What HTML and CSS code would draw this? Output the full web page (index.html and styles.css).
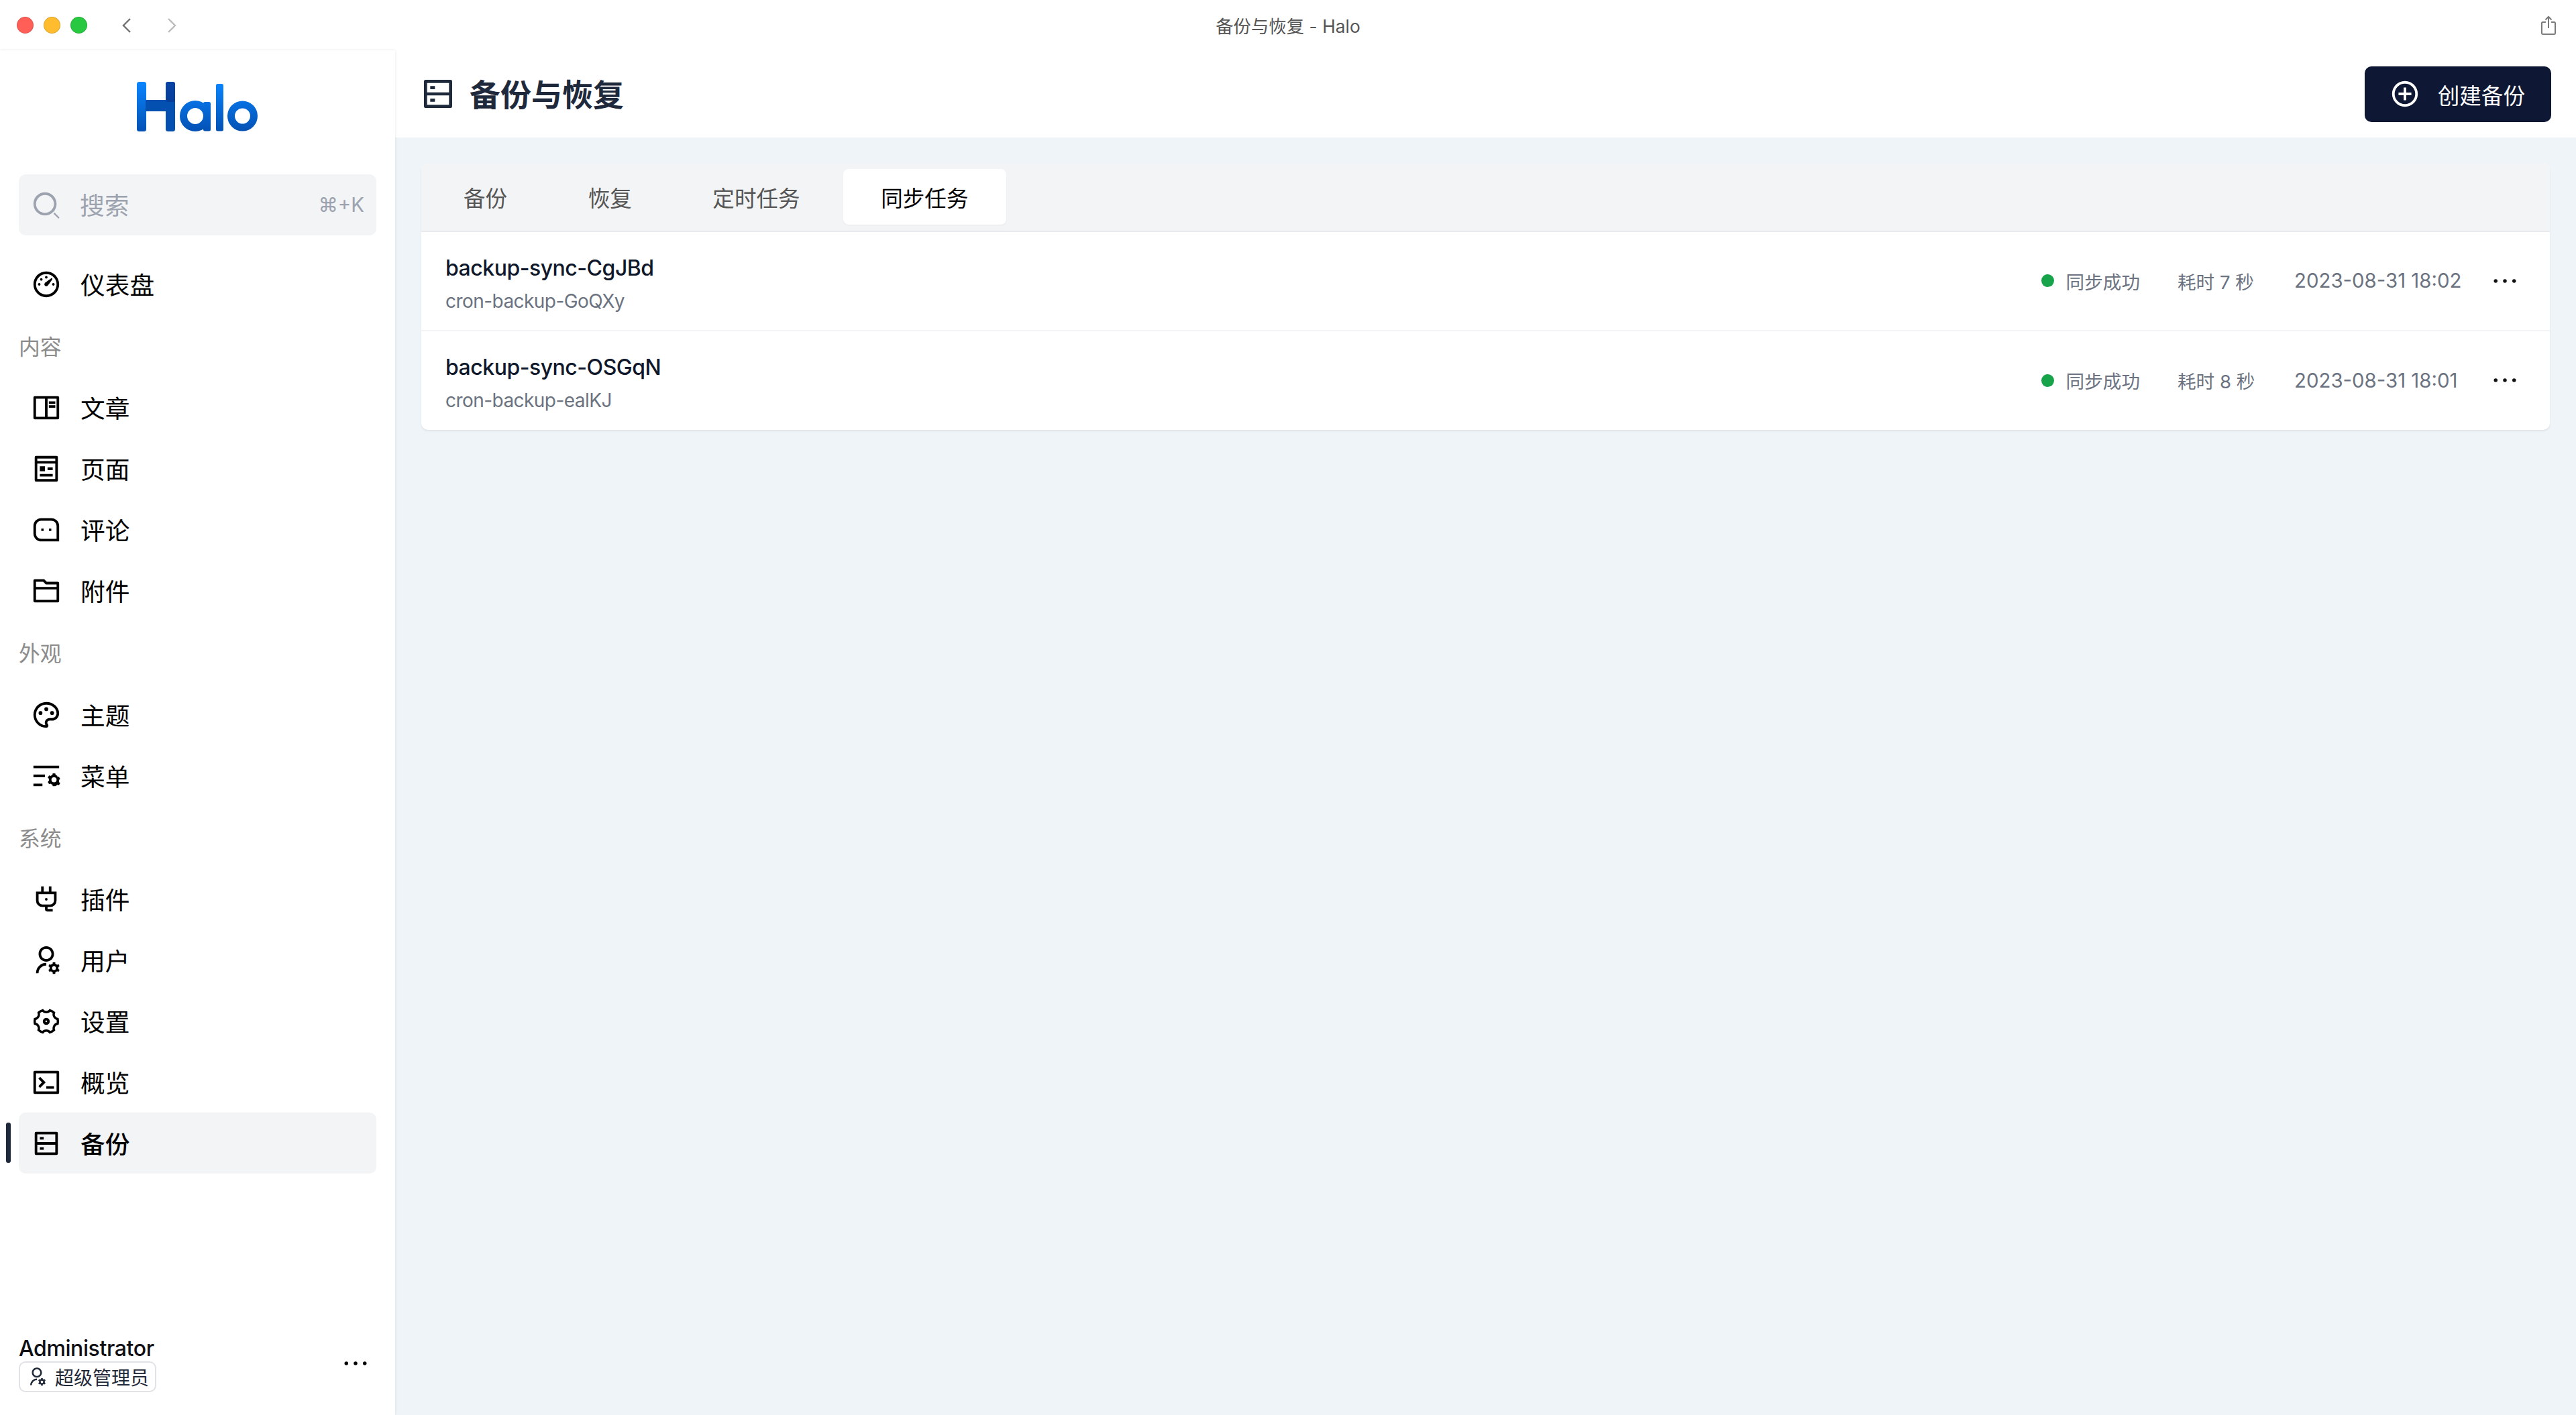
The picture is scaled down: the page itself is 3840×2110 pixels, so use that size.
FILE: index.html
```html
<!DOCTYPE html>
<html lang="zh-CN">
<head>
    <meta charset="UTF-8" />
    <title>备份与恢复 - Halo</title>
    <link rel="stylesheet" href="styles.css">
</head>
<body>
    <!-- Window title bar -->
    <header class="titlebar">
        <div class="titlebar-left">
            <span class="light light-red"></span>
            <span class="light light-yellow"></span>
            <span class="light light-green"></span>
            <svg class="nav-arrow" viewBox="0 0 14 24"><path d="M12 2 2 12l10 10"/></svg>
            <svg class="nav-arrow nav-arrow-off" viewBox="0 0 14 24"><path d="m2 2 10 10L2 22"/></svg>
        </div>
        <div class="titlebar-title">备份与恢复 - Halo</div>
        <div class="titlebar-right">
            <svg class="share-icon" viewBox="0 0 24 30"><path d="M8 10H3.5a1.5 1.5 0 0 0-1.500 1.500v15A1.500 1.500 0 0 0 3.500 28h17a1.500 1.500 0 0 0 1.500-1.500v-15a1.500 1.500 0 0 0-1.500-1.500H16M12 19V2M7.500 6.500 12 2l4.500 4.500"/></svg>
        </div>
    </header>

    <div class="app">
        <aside class="sidebar">
            <svg class="logo" viewBox="0 0 181 74" role="img" aria-label="Halo">
                <defs>
                    <linearGradient id="logoBlue" gradientUnits="userSpaceOnUse" x1="0" y1="0" x2="0" y2="74">
                        <stop offset="0" stop-color="#0a85ff"/>
                        <stop offset="1" stop-color="#0351b4"/>
                    </linearGradient>
                    <linearGradient id="logoDark" gradientUnits="userSpaceOnUse" x1="0" y1="0" x2="0" y2="40">
                        <stop offset="0" stop-color="#0743a6"/>
                        <stop offset="1" stop-color="#053c95"/>
                    </linearGradient>
                </defs>
                <rect x="0" y="0" width="14" height="74" rx="3.500" fill="url(#logoBlue)"/>
                <rect x="43" y="0" width="14" height="74" rx="3.500" fill="#0450b0"/>
                <rect x="43" y="0" width="14" height="30" rx="3.500" fill="url(#logoDark)"/>
                <rect x="13" y="27" width="31" height="17" fill="#0450b0"/>
                <circle cx="87" cy="51" r="17.500" fill="none" stroke="url(#logoBlue)" stroke-width="11"/>
                <rect x="99" y="30" width="11" height="43.500" rx="2.500" fill="url(#logoBlue)"/>
                <rect x="118" y="3" width="11" height="70.500" rx="2.500" fill="url(#logoBlue)"/>
                <circle cx="157.500" cy="51" r="17" fill="none" stroke="url(#logoBlue)" stroke-width="11"/>
            </svg>

            <div class="search">
                <svg class="icon" viewBox="0 0 24 24"><path d="M11 2c4.968 0 9 4.032 9 9s-4.032 9-9 9-9-4.032-9-9 4.032-9 9-9zm0 16c3.867 0 7-3.133 7-7 0-3.868-3.133-7-7-7-3.868 0-7 3.132-7 7 0 3.867 3.132 7 7 7zm7.500-.3 3.800 3.900-.8.8-3.900-3.800z"/></svg>
                <span class="search-text">搜索</span>
                <span class="search-key">⌘+K</span>
            </div>

            <nav class="menu">
                <a class="menu-item">
                    <svg class="icon" viewBox="0 0 24 24"><path d="M12 2c5.523 0 10 4.477 10 10s-4.477 10-10 10S2 17.523 2 12 6.477 2 12 2zm0 2a8 8 0 1 0 0 16 8 8 0 0 0 0-16zm3.833 3.337c.237-.166.559-.138.763.067.204.204.23.526.063.76-2.18 3.046-3.38 4.678-3.598 4.897-.586.585-1.536.585-2.122 0-.585-.586-.585-1.536 0-2.122.374-.373 2.005-1.574 4.894-3.602zM17.500 11c.552 0 1 .448 1 1s-.448 1-1 1-1-.448-1-1 .448-1 1-1zm-11 0c.552 0 1 .448 1 1s-.448 1-1 1-1-.448-1-1 .448-1 1-1zm2.318-3.596c.39.39.39 1.023 0 1.414-.39.39-1.024.39-1.414 0-.39-.39-.39-1.024 0-1.414.39-.39 1.023-.39 1.414 0zM12 5.500c.552 0 1 .448 1 1s-.448 1-1 1-1-.448-1-1 .448-1 1-1z"/></svg>
                    仪表盘
                </a>

                <div class="menu-label">内容</div>
                <a class="menu-item">
                    <svg class="icon" viewBox="0 0 24 24"><path d="M2 3.993A.993.993 0 0 1 2.992 3h18.016c.548 0 .992.445.992.993v16.014a.993.993 0 0 1-.992.993H2.992A.993.993 0 0 1 2 20.007V3.993zM11 5H4v14h7V5zm2 0v14h7V5h-7zm1 2h5v2h-5V7zm0 3h5v2h-5v-2z"/></svg>
                    文章
                </a>
                <a class="menu-item">
                    <svg class="icon" viewBox="0 0 24 24"><path d="M5 8v12h14V8H5zm0-2h14V4H5v2zm15 16H4a1 1 0 0 1-1-1V3a1 1 0 0 1 1-1h16a1 1 0 0 1 1 1v18a1 1 0 0 1-1 1zM7 10h4v4H7v-4zm0 6h10v2H7v-2zm6-5h4v2h-4v-2z"/></svg>
                    页面
                </a>
                <a class="menu-item">
                    <svg class="icon" viewBox="0 0 24 24"><path class="icon-line" d="M8 4h8a5 5 0 0 1 5 5v11H8a5 5 0 0 1-5-5V9a5 5 0 0 1 5-5z"/><rect x="8.100" y="11.100" width="1.800" height="1.800"/><rect x="14.100" y="11.100" width="1.800" height="1.800"/></svg>
                    评论
                </a>
                <a class="menu-item">
                    <svg class="icon" viewBox="0 0 24 24"><path d="M12.414 5H21a1 1 0 0 1 1 1v14a1 1 0 0 1-1 1H3a1 1 0 0 1-1-1V4a1 1 0 0 1 1-1h7.414l2 2zM20 11H4v8h16v-8zm0-2V7h-8.414l-2-2H4v4h16z"/></svg>
                    附件
                </a>

                <div class="menu-label">外观</div>
                <a class="menu-item">
                    <svg class="icon" viewBox="0 0 24 24"><path d="M12 2c5.522 0 10 3.978 10 8.889a5.558 5.558 0 0 1-5.556 5.555h-1.966c-.922 0-1.667.745-1.667 1.667 0 .422.167.811.422 1.100.267.3.434.689.434 1.122C13.667 21.256 12.900 22 12 22 6.478 22 2 17.522 2 12S6.478 2 12 2zm-1.189 16.111a3.664 3.664 0 0 1 3.667-3.667h1.966A3.558 3.558 0 0 0 20 10.889C20 7.139 16.468 4 12 4a8 8 0 0 0-.676 15.972 3.648 3.648 0 0 1-.513-1.860zM7.500 12a1.500 1.500 0 1 1 0-3 1.500 1.500 0 0 1 0 3zm9 0a1.500 1.500 0 1 1 0-3 1.500 1.500 0 0 1 0 3zM12 9a1.500 1.500 0 1 1 0-3 1.500 1.500 0 0 1 0 3z"/></svg>
                    主题
                </a>
                <a class="menu-item">
                    <svg class="icon" viewBox="0 0 24 24"><path d="M2 18h7v2H2v-2zm0-7h9v2H2v-2zm0-7h20v2H2V4zm18.674 9.025l1.156-.391 1 1.732-.916.805a4.017 4.017 0 0 1 0 1.658l.916.805-1 1.732-1.156-.391c-.41.37-.898.655-1.435.83L19 20h-2l-.24-1.196a3.996 3.996 0 0 1-1.434-.83l-1.156.392-1-1.732.916-.805a4.017 4.017 0 0 1 0-1.658l-.916-.805 1-1.732 1.156.391c.41-.37.898-.655 1.435-.83L17 10h2l.24 1.196c.536.174 1.024.46 1.434.83zM18 17a2 2 0 1 0 0-4 2 2 0 0 0 0 4z"/></svg>
                    菜单
                </a>

                <div class="menu-label">系统</div>
                <a class="menu-item">
                    <svg class="icon" viewBox="0 0 24 24"><path class="icon-line" d="M9 2v5M15 2v5M5 7h14v6a4 4 0 0 1-4 4H9a4 4 0 0 1-4-4zM12 17v2.500a1 1 0 0 0 1 1h4"/><circle cx="12" cy="12" r="1"/></svg>
                    插件
                </a>
                <a class="menu-item">
                    <svg class="icon" viewBox="0 0 24 24"><path d="M12 14v2a6 6 0 0 0-6 6H4a8 8 0 0 1 8-8zm0-1c-3.315 0-6-2.685-6-6s2.685-6 6-6 6 2.685 6 6-2.685 6-6 6zm0-2c2.210 0 4-1.790 4-4s-1.790-4-4-4-4 1.790-4 4 1.790 4 4 4zm2.595 7.812a3.510 3.510 0 0 1 0-1.623l-.992-.573 1-1.732.992.573A3.496 3.496 0 0 1 17 14.645V13.500h2v1.145c.532.158 1.012.44 1.405.812l.992-.573 1 1.732-.992.573a3.510 3.510 0 0 1 0 1.622l.992.573-1 1.732-.992-.573a3.496 3.496 0 0 1-1.405.812V22.500h-2v-1.145a3.496 3.496 0 0 1-1.405-.812l-.992.573-1-1.732.992-.572zM18 19.500a1.500 1.500 0 1 0 0-3 1.500 1.500 0 0 0 0 3z"/></svg>
                    用户
                </a>
                <a class="menu-item">
                    <svg class="icon" viewBox="0 0 24 24"><path class="icon-line" transform="translate(1.200 1.200) scale(.9)" d="M5.334 4.545a9.990 9.990 0 0 1 3.542-2.048A3.993 3.993 0 0 0 12 3.999a3.993 3.993 0 0 0 3.124-1.502 9.990 9.990 0 0 1 3.542 2.048 3.993 3.993 0 0 0 .262 3.454 3.993 3.993 0 0 0 2.863 1.955 10.043 10.043 0 0 1 0 4.090c-1.160.178-2.230.86-2.863 1.955a3.993 3.993 0 0 0-.262 3.455 9.990 9.990 0 0 1-3.542 2.047A3.993 3.993 0 0 0 12 20a3.993 3.993 0 0 0-3.124 1.502 9.990 9.990 0 0 1-3.542-2.047 3.993 3.993 0 0 0-.262-3.455 3.993 3.993 0 0 0-2.863-1.954 10.043 10.043 0 0 1 0-4.091 3.993 3.993 0 0 0 2.863-1.955 3.993 3.993 0 0 0 .262-3.454z"/><circle class="icon-line" cx="12" cy="12" r="1.700"/></svg>
                    设置
                </a>
                <a class="menu-item">
                    <svg class="icon" viewBox="0 0 24 24"><path d="M3 3h18a1 1 0 0 1 1 1v16a1 1 0 0 1-1 1H3a1 1 0 0 1-1-1V4a1 1 0 0 1 1-1zm1 2v14h16V5H4zm8 10h6v2h-6v-2zm-3.333-3L5.838 9.172l1.415-1.415L11.495 12l-4.242 4.243-1.415-1.415L8.667 12z"/></svg>
                    概览
                </a>
                <a class="menu-item menu-item-active">
                    <span class="menu-marker"></span>
                    <svg class="icon" viewBox="0 0 24 24"><path d="M5 11h14V5H5v6zm16-7v16a1 1 0 0 1-1 1H4a1 1 0 0 1-1-1V4a1 1 0 0 1 1-1h16a1 1 0 0 1 1 1zm-2 9H5v6h14v-6zM7 15h3v2H7v-2zm0-8h3v2H7V7z"/></svg>
                    备份
                </a>
            </nav>

            <div class="profile">
                <div class="profile-info">
                    <div class="profile-name">Administrator</div>
                    <div class="profile-badge">
                        <svg viewBox="0 0 24 24"><path d="M12 14v2a6 6 0 0 0-6 6H4a8 8 0 0 1 8-8zm0-1c-3.315 0-6-2.685-6-6s2.685-6 6-6 6 2.685 6 6-2.685 6-6 6zm0-2c2.210 0 4-1.790 4-4s-1.790-4-4-4-4 1.790-4 4 1.790 4 4 4zm2.595 7.812a3.510 3.510 0 0 1 0-1.623l-.992-.573 1-1.732.992.573A3.496 3.496 0 0 1 17 14.645V13.500h2v1.145c.532.158 1.012.44 1.405.812l.992-.573 1 1.732-.992.573a3.510 3.510 0 0 1 0 1.622l.992.573-1 1.732-.992-.573a3.496 3.496 0 0 1-1.405.812V22.500h-2v-1.145a3.496 3.496 0 0 1-1.405-.812l-.992.573-1-1.732.992-.572zM18 19.500a1.500 1.500 0 1 0 0-3 1.500 1.500 0 0 0 0 3z"/></svg>
                        超级管理员
                    </div>
                </div>
                <svg class="icon more" viewBox="0 0 24 24"><circle cx="4.500" cy="12" r="1.500"/><circle cx="12" cy="12" r="1.500"/><circle cx="19.500" cy="12" r="1.500"/></svg>
            </div>
        </aside>

        <main class="main">
            <div class="page-header">
                <h1 class="page-title">
                    <svg viewBox="0 0 24 24"><path d="M5 11h14V5H5v6zm16-7v16a1 1 0 0 1-1 1H4a1 1 0 0 1-1-1V4a1 1 0 0 1 1-1h16a1 1 0 0 1 1 1zm-2 9H5v6h14v-6zM7 15h3v2H7v-2zm0-8h3v2H7V7z"/></svg>
                    <span class="page-title-text">备份与恢复</span>
                </h1>
                <button class="btn-create" type="button">
                    <svg class="icon" viewBox="0 0 24 24"><path d="M11 11V7h2v4h4v2h-4v4h-2v-4H7v-2h4zm1 11C6.477 22 2 17.523 2 12S6.477 2 12 2s10 4.477 10 10-4.477 10-10 10zm0-2a8 8 0 1 0 0-16 8 8 0 0 0 0 16z"/></svg>
                    创建备份
                </button>
            </div>

            <div class="content">
                <section class="card">
                    <div class="tabs">
                        <div class="tab">备份</div>
                        <div class="tab">恢复</div>
                        <div class="tab">定时任务</div>
                        <div class="tab tab-active">同步任务</div>
                    </div>

                    <div class="row">
                        <div class="row-main">
                            <div class="row-title">backup-sync-CgJBd</div>
                            <div class="row-sub">cron-backup-GoQXy</div>
                        </div>
                        <div class="row-status"><span class="dot"></span>同步成功</div>
                        <div class="row-duration">耗时 7 秒</div>
                        <div class="row-date">2023-08-31 18:02</div>
                        <svg class="icon more" viewBox="0 0 24 24"><circle cx="4.500" cy="12" r="1.500"/><circle cx="12" cy="12" r="1.500"/><circle cx="19.500" cy="12" r="1.500"/></svg>
                    </div>
                    <div class="row">
                        <div class="row-main">
                            <div class="row-title">backup-sync-OSGqN</div>
                            <div class="row-sub">cron-backup-ealKJ</div>
                        </div>
                        <div class="row-status"><span class="dot"></span>同步成功</div>
                        <div class="row-duration">耗时 8 秒</div>
                        <div class="row-date">2023-08-31 18:01</div>
                        <svg class="icon more" viewBox="0 0 24 24"><circle cx="4.500" cy="12" r="1.500"/><circle cx="12" cy="12" r="1.500"/><circle cx="19.500" cy="12" r="1.500"/></svg>
                    </div>
                </section>
            </div>
        </main>
    </div>
</body>
</html>
```

FILE: styles.css
```css
* {
    margin: 0;
    padding: 0;
    box-sizing: border-box;
}

html, body {
    height: 100%;
}

body {
    display: flex;
    flex-direction: column;
    font-family: Inter, "Noto Sans CJK SC", sans-serif;
    background: #fff;
    color: #000;
    overflow: hidden;
}

/* Window title bar */
.titlebar {
    display: grid;
    grid-template-columns: 1fr auto 1fr;
    align-items: center;
    height: 75px;
    padding: 0 25px;
    flex-shrink: 0;
}

.titlebar-left {
    display: flex;
    align-items: center;
    gap: 15px;
}

.light {
    width: 25px;
    height: 25px;
    border-radius: 50%;
    border: 1px solid rgba(0, 0, 0, 0.14);
}

.light-red { background: #ff5f57; }
.light-yellow { background: #febc2e; }
.light-green { background: #28c840; }

.nav-arrow {
    width: 14px;
    height: 24px;
    margin-left: 37px;
    fill: none;
    stroke: #6f6f6f;
    stroke-width: 2.4;
}

.nav-arrow-off {
    margin-left: 38px;
    stroke: #bdbdbd;
}

.titlebar-title {
    font-size: 26.4px;
    color: #555;
}

.titlebar-right {
    display: flex;
    justify-content: flex-end;
}

.share-icon {
    width: 24px;
    height: 30px;
    margin-right: 4px;
    fill: none;
    stroke: #7a7a7a;
    stroke-width: 2;
}

/* App layout */
.app {
    flex: 1;
    display: flex;
    min-height: 0;
}

.sidebar {
    position: relative;
    z-index: 1;
    width: 589px;
    flex-shrink: 0;
    display: flex;
    flex-direction: column;
    background: #fff;
    box-shadow: 0 0 4px rgba(0, 0, 0, 0.1);
}

.logo {
    width: 181px;
    height: 74px;
    margin: 47px auto 64px;
    flex-shrink: 0;
}

.icon {
    width: 46px;
    height: 46px;
    flex-shrink: 0;
    fill: currentColor;
}

.icon-line {
    fill: none;
    stroke: currentColor;
    stroke-width: 2;
}

.search {
    display: flex;
    align-items: center;
    height: 91px;
    margin: 0 28px;
    padding: 0 18px;
    border-radius: 10px;
    background: #f3f4f6;
    color: #9ca3af;
}

.search-text {
    margin-left: 27px;
    margin-bottom: 4px;
    font-size: 36.7px;
}

.search-key {
    margin-left: auto;
    font-size: 29.4px;
}

.menu {
    margin-top: 26px;
    padding: 0 28px;
}

.menu-item {
    position: relative;
    display: flex;
    align-items: center;
    gap: 28px;
    height: 91px;
    padding-left: 18px;
    border-radius: 10px;
    font-size: 36.7px;
    color: #000;
}

.menu-item .icon {
    margin-top: 2px;
}

.menu-item-active {
    background: #f3f4f6;
    font-weight: 500;
}

.menu-marker {
    position: absolute;
    left: -19px;
    top: 15px;
    width: 7px;
    height: 60px;
    border-radius: 3px;
    background: #1e293b;
}

.menu-label {
    display: flex;
    align-items: center;
    height: 93.5px;
    font-size: 31.8px;
    color: #8c8c8c;
}

.profile {
    display: flex;
    align-items: center;
    justify-content: space-between;
    margin-top: auto;
    padding: 0 37px 34px 28px;
}

.profile-name {
    font-size: 32px;
    font-weight: 500;
    letter-spacing: -0.4px;
    line-height: 42px;
    color: #0f0f14;
}

.profile-badge {
    display: flex;
    align-items: center;
    gap: 12px;
    width: 205px;
    height: 46px;
    margin-top: -2px;
    padding-left: 10px;
    border: 2.4px solid #e0e2e6;
    border-radius: 10px;
    font-size: 28px;
    color: #1f2937;
}

.profile-badge svg {
    width: 30px;
    height: 30px;
    fill: currentColor;
}

.more {
    width: 44px;
    height: 44px;
}

/* Main area */
.main {
    flex: 1;
    display: flex;
    flex-direction: column;
    min-width: 0;
    background: #eff4f8;
}

.page-header {
    display: flex;
    align-items: center;
    justify-content: space-between;
    height: 130px;
    padding: 0 37px 0 36px;
    background: #fff;
    flex-shrink: 0;
}

.page-title {
    display: flex;
    align-items: center;
    gap: 19px;
    font-size: 46px;
    font-weight: 700;
    color: #1e293b;
}

.page-title svg {
    width: 56px;
    height: 56px;
    fill: currentColor;
}

.page-title-text {
    margin-bottom: 4px;
}

.btn-create {
    display: flex;
    align-items: center;
    gap: 26px;
    height: 83px;
    padding: 0 39px 0 37px;
    border: none;
    border-radius: 10px;
    background: #0e1733;
    color: #fff;
    font-family: inherit;
    font-size: 32.6px;
}

.content {
    padding: 39px;
}

.card {
    background: #fff;
    border-radius: 10px;
    box-shadow: 0 2px 3px rgba(0, 0, 0, 0.07);
    overflow: hidden;
}

.tabs {
    display: flex;
    gap: 8.5px;
    height: 102px;
    padding: 8px 7px 0;
    background: #f3f4f6;
    border-bottom: 2.4px solid #e9eaee;
}

.tab {
    display: flex;
    align-items: center;
    height: 83px;
    padding: 0 56px;
    border-radius: 8px;
    font-size: 32.6px;
    color: #555;
}

.tab-active {
    background: #fff;
    color: #000;
    box-shadow: 0 1px 2px rgba(0, 0, 0, 0.06);
}

.row {
    display: flex;
    align-items: center;
    height: 147.5px;
    padding: 0 45px 0 36px;
    border-bottom: 2.4px solid #f3f4f6;
}

.row:last-child {
    border-bottom: none;
}

.row-main {
    flex: 1;
    margin-top: 10px;
}

.row-title {
    font-size: 32px;
    font-weight: 500;
    letter-spacing: -0.5px;
    line-height: 42px;
    color: #0f172a;
}

.row-sub {
    margin-top: 8px;
    font-size: 28px;
    letter-spacing: -0.55px;
    line-height: 40px;
    color: #6b7280;
}

.row-status {
    display: flex;
    align-items: center;
    gap: 18px;
    font-size: 27.6px;
    color: #6b7280;
}

.dot {
    width: 19px;
    height: 19px;
    border-radius: 50%;
    background: #16a34a;
}

.row-duration {
    width: 116px;
    margin-left: 56px;
    font-size: 27.6px;
    white-space: nowrap;
    color: #6b7280;
}

.row-date {
    width: 246px;
    margin-left: 58px;
    font-size: 29.4px;
    white-space: nowrap;
    color: #6b7280;
}

.row .more {
    margin-left: 46px;
    color: #111;
}
```
